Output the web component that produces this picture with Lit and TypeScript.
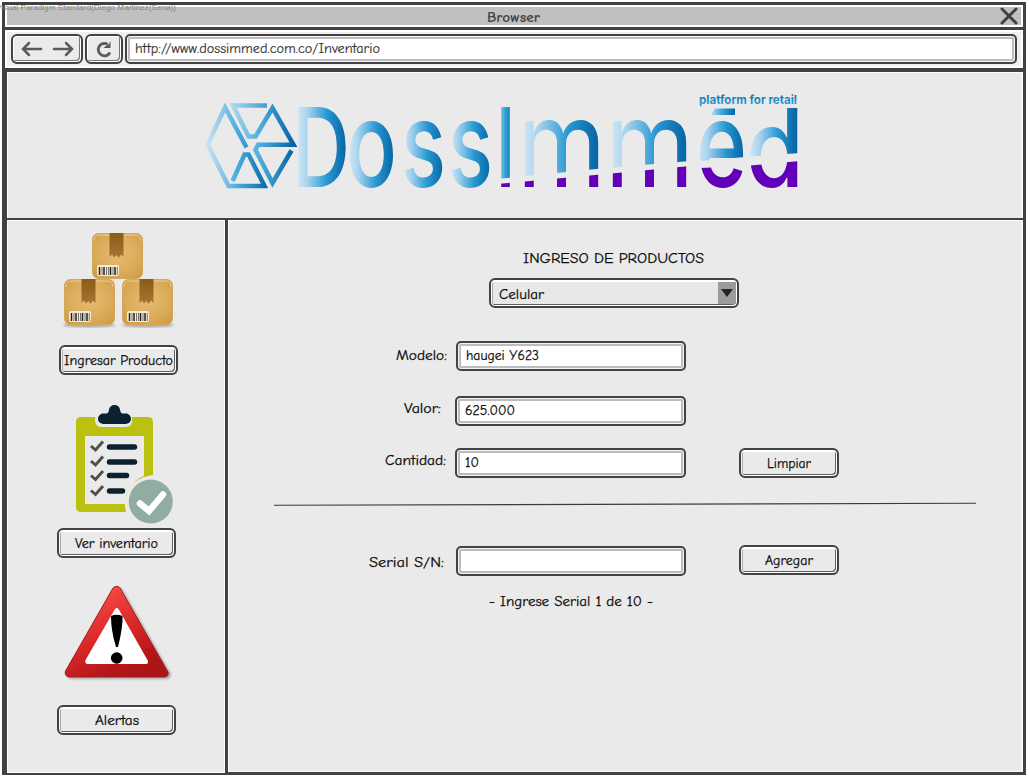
import { LitElement, html, svg, css, nothing } from "lit";
import { customElement, property } from "lit/decorators.js";

// One line of interface text with a fixed advance width and its baseline at 15px.
const line = (text: string, width: number, cls = "") => html`
  <svg class="line ${cls}" width=${width} height="20">
    <text x="0" y="15" textLength=${width} lengthAdjust="spacingAndGlyphs">${text}</text>
  </svg>`;

const shared = css`
  :host { display: block; box-sizing: border-box; }
  * { box-sizing: border-box; }
  svg { display: block; flex: none; overflow: visible; }
  .line { font: 14px "Comic Sans MS", "Comic Neue", "Noto Sans", sans-serif; fill: #0c0c0c; stroke: #0c0c0c; stroke-width: .25px; }
  .bold { font-weight: 700; fill: #444; stroke: none; font-size: 14px; }
  .url { fill: #333; stroke: #333; stroke-width: .15px; }
`;

@customElement("sketch-button")
class SketchButton extends LitElement {
  @property() label = "";
  @property({ type: Number }) text = 50;
  static styles = [shared, css`
    .btn { height: 30px; border: 2px solid #434345; border-radius: 6px; background: #eaeaea; display: flex; align-items: center; justify-content: center; padding: 0;
      box-shadow: inset 0 2px #fff, inset 1px 0 #f6f6f6, inset -1px -1px #fff, inset 2px 0 #aaa, inset -2px -2px #606062; }
  `];
  render() { return html`<div class="btn">${line(this.label, this.text)}</div>`; }
}

@customElement("sketch-field")
class SketchField extends LitElement {
  @property() value = "";
  @property({ type: Number }) text = 0;
  @property() kind = "";
  static styles = [shared, css`
    .field { height: 30px; border: 2px solid #434345; border-radius: 5px; background: #fff; padding: 2px 0 0 8px;
      box-shadow: inset 0 0 0 1px #f4f4f4, inset 0 0 0 3px #bdbdbd; }
  `];
  render() {
    return html`<div class="field">${this.value ? line(this.value, this.text, this.kind) : nothing}</div>`;
  }
}

const carton = (x: number, y: number) => svg`
  <g transform="translate(${x} ${y})">
    <rect x=".5" y=".5" width="50" height="45" rx="6" fill="url(#card)" stroke="#d3a75d" />
    <path d="M2 8Q2 2 8 2H43Q49 2 49 8" fill="none" stroke="#edcf94" />
    <path d="M17.500 0H31.500V24L29 21.500 26.500 25 24.500 22 22 24.500 20 21.500 17.500 24Z" fill="url(#tape)" />
    <rect x="5" y="32" width="22" height="11" rx="2" fill="#f7ead3" />
    <path d="M7.500 34V42M12 34V42M18.500 34V42M23 34V42" stroke="#222" stroke-width="1.500" />
    <path d="M10 34V42M14.500 34V42M16.500 34V42M21 34V42M25.300 34V42" stroke="#555" stroke-width=".8" />
  </g>`;

const boxes = html`
  <svg width="116" height="98" viewBox="61 232 116 98">
    <defs>
      <radialGradient id="card" cx=".5" cy=".45" r=".75"><stop stop-color="#e6bd72" /><stop offset=".6" stop-color="#daaa58" /><stop offset="1" stop-color="#cb9640" /></radialGradient>
      <linearGradient id="tape" x2="0" y2="1"><stop stop-color="#8a5a18" /><stop offset="1" stop-color="#a67631" /></linearGradient>
      <filter id="soft"><feGaussianBlur stdDeviation="1.200" /></filter>
    </defs>
    <ellipse cx="89" cy="325" rx="26" ry="2.500" fill="#aaa" filter="url(#soft)" />
    <ellipse cx="148" cy="325" rx="26" ry="2.500" fill="#aaa" filter="url(#soft)" />
    ${carton(92, 233)}${carton(64, 279)}${carton(122, 279)}
  </svg>`;

const clipboard = html`
  <svg width="104" height="124" viewBox="73 402 104 124">
    <path fill-rule="evenodd" fill="#bac110" d="M81 417H148Q153 417 153 422V475Q142 476 134 483Q125 493 124.500 503L126 512H81Q76 512 76 507V422Q76 417 81 417ZM85 436V504H124.500Q125 493 134 483Q138 478 144 476V436Z" />
    <path d="M98 414Q104 414 106 410Q109 403 115 403T123 410Q125 413 130 414Q134 419 131 425Q129 427 125 427H102Q96 427 95 421Q95 416 98 414Z" fill="#eaeaea" />
    <path d="M102 413.500H107Q109 412 109 409.500Q110 405 114.500 405T120 409.500Q120 412 122 413.500H127Q131 415 131 419T126 424H103Q98 423 98 419T102 413.500Z" fill="#0b2130" />
    <g fill="none" stroke="#50514a" stroke-width="3"><path d="M91 446L95.500 450 103 441.500M91 461L95.500 465 103 456.500M91 475.500L95.500 479.500 103 471M91 490.500L95.500 494.500 103 486" /></g>
    <path d="M109.500 447H134.500M109.500 462H134.500M109.500 475.500H126.500M109.500 491H122.500" stroke="#0b2130" stroke-width="5.500" stroke-linecap="round" />
    <circle cx="150.800" cy="501.500" r="22" fill="#91aca0" />
    <path d="M140 503.500L149 511 163 494.500" fill="none" stroke="#fff" stroke-width="6.500" stroke-linecap="round" stroke-linejoin="miter" />
  </svg>`;

const warning = html`
  <svg width="112" height="98" viewBox="62 584 112 98">
    <defs>
      <linearGradient id="red" x2=".5" y2="1"><stop stop-color="#ff5a52" /><stop offset=".55" stop-color="#df2b2b" /><stop offset="1" stop-color="#ad1217" /></linearGradient>
      <filter id="drop"><feDropShadow dx="2" dy="1.500" stdDeviation="1" flood-opacity=".3" /></filter>
    </defs>
    <path d="M113 588Q116.500 584.500 120 588L168 672Q169 676 165 677H69Q64 676 65.500 671Z" fill="url(#red)" stroke="#9b2020" filter="url(#drop)" />
    <path d="M115 609Q116.500 607 118.500 609L148 661Q148.500 664 146 664H87Q84.500 663 85.500 660Z" fill="#fff" />
    <path d="M111 616Q116.500 613.500 122.500 616Q123 627 118 647H116Q111 631 111 616Z" />
    <circle cx="116.700" cy="658" r="5.800" />
  </svg>`;

// Glyph, left edge, advance width, font size, weight.
const glyphs: [string, number, number, number, number][] = [
  ["D", 292, 58, 110, 500], ["o", 346, 51, 120, 500], ["s", 401, 45, 120, 500], ["s", 448, 45, 120, 500], ["I", 493, 25, 110, 400],
  ["m", 517, 89, 121, 400], ["m", 605, 89, 121, 400], ["e", 696, 51, 120, 500], ["d", 746, 58, 108, 500],
];
const bands = [[299, 346], [351, 393], [404, 443], [451, 490], [501, 510], [524, 599], [612, 687], [700, 743], [752, 796]];

const logo = html`
  <svg width="600" height="104" viewBox="202 90 600 104">
    <defs>
      <linearGradient id="blue"><stop stop-color="#d9e9f5" /><stop offset=".22" stop-color="#a9d4ef" /><stop offset=".58" stop-color="#2798d2" /><stop offset="1" stop-color="#005b9c" /></linearGradient>
      <linearGradient id="slab"><stop stop-color="#b6dcf3" /><stop offset=".5" stop-color="#319fd7" /><stop offset="1" stop-color="#0067aa" /></linearGradient>
      <linearGradient id="tag" x2="0" y2="1"><stop stop-color="#0066a8" /><stop offset="1" stop-color="#38a5d9" /></linearGradient>
      <linearGradient id="hex1" gradientUnits="userSpaceOnUse" x1="206" x2="270"><stop stop-color="#cfe5f5" /><stop offset=".5" stop-color="#4aaadb" /><stop offset="1" stop-color="#0062a6" /></linearGradient>
      <linearGradient id="hex2" gradientUnits="userSpaceOnUse" x1="226" x2="297"><stop stop-color="#c1e1f4" /><stop offset=".5" stop-color="#4ba9db" /><stop offset="1" stop-color="#005c9d" /></linearGradient>
      <pattern id="paint" patternUnits="userSpaceOnUse" x="200" y="80" width="620" height="130">
        <g transform="translate(-200 -80)">
          ${bands.map(([a, b]) => svg`<rect x=${a - 4} y="80" width=${b - a + 8} height="130" fill=${b - a < 20 ? "url(#slab)" : "url(#blue)"} />`)}
          <path d="M497 179L606 168 690 161 700 161 745 157 800 153V210H497Z" fill="#eaeaea" />
          <path d="M497 184L606 174 690 166 700 168 745 166 800 161V210H497Z" fill="#6100b8" />
        </g>
      </pattern>
    </defs>
    <g fill="none" stroke-width="4.500" stroke-linejoin="miter">
      <path d="M246.500 147.500L225 107.500 207.500 144.500 228.500 186H264.500L248.500 154.500H244.500L232.500 181" stroke="url(#hex1)" />
      <path d="M267 105.500H233L248.500 136.500H255.500L272.500 108 293.500 144.800H258L255.500 150 272.500 183 291.500 150.500" stroke="url(#hex2)" />
    </g>
    <text class="brand" y="187" fill="url(#paint)">${glyphs.map(([g, x, w, s, b]) => svg`<tspan x=${x} textLength=${w} lengthAdjust="spacingAndGlyphs" font-size=${s} font-weight=${b}>${g}</tspan>`)}</text>
    <path d="M711 115L715 108.500H735V115Z" fill="url(#slab)" />
    <text class="tag" x="699" y="103.500" textLength="98" lengthAdjust="spacingAndGlyphs" fill="url(#tag)">platform for retail</text>
  </svg>`;

@customElement("app-root")
class AppRoot extends LitElement {
  static styles = [shared, css`
    :host { width: 1030px; height: 779px; background: #fff; padding: 2px 0 0 2px; position: relative; overflow: hidden; }
    .window { width: 1024px; height: 773px; border: 3px solid #414142; border-bottom-width: 2px; display: flex; flex-direction: column; }
    .title { height: 22px; border: 2px solid #fff; background: #c0c0c0; display: flex; justify-content: flex-end; padding: 0 3px 0 0; flex: none; position: relative; }
    .title .bold { position: absolute; left: 480px; top: 0; }
    .bar { height: 41px; border-top: 3px solid #414142; background: #efefef; display: flex; padding: 4px 6px 0 6px; gap: 2px; flex: none; box-shadow: inset 0 2px #fff, inset 0 -2px #fff, inset 2px 0 #fff, inset -2px 0 #fff; }
    .nav { height: 30px; border: 2px solid #434345; border-radius: 6px; background: #ebebeb; display: flex; align-items: center; justify-content: center; box-shadow: inset 1px 1px #fff, inset -1px -1px #fff, inset -2px -2px #777; }
    .pair { width: 72px; gap: 11px; }
    .reload { width: 38px; }
    .address { flex: 1; }
    .page { flex: 1; background: #eaeaea; border-left: 2px solid #414142; border-top: 4px solid #414142; display: flex; flex-direction: column; min-height: 0; }
    .banner { height: 146px; box-shadow: inset 0 1px #fff, inset 1px 0 #fff, inset -2px 0 #f8f8f8; padding: 18px 0 0 195px; flex: none; }
    .body { flex: 1; border-top: 2px solid #414142; display: flex; min-height: 0; }
    .side { width: 221px; border-right: 3px solid #414142; display: flex; flex-direction: column; box-shadow: inset 1px 1px #fff, inset -1px -1px #fff; flex: none; }
    .boxes { margin: 12px 0 0 54px; }
    .ingresar { width: 119px; margin: 15px 0 0 52px; }
    .board { margin: 27px 0 0 66px; }
    .ver { width: 119px; margin: 2px 0 0 50px; }
    .warn { margin: 26px 0 0 55px; }
    .alertas { width: 119px; margin: 23px 0 0 50px; }
    .main { flex: 1; display: flex; flex-direction: column; box-shadow: inset 1px 1px #fff, inset -2px -1px #f8f8f8; border-bottom: 1px solid #414142; }
    .heading { margin: 28px 0 0 295px; }
    .select { width: 250px; height: 30px; margin: 10px 0 0 261px; border: 2px solid #434345; border-radius: 6px; display: flex; padding: 4px 0 0 8px; background: #e8e8e8; justify-content: space-between; box-shadow: inset 0 2px #fff, inset 1px 0 #fff, inset -1px -1px #fff, inset 2px 0 #aaa, inset -2px -2px #606062; }
    .drop { width: 18px; height: 22px; margin: -2px 1px 0 0; background: #9b9b9b; }
    .row { display: flex; height: 30px; }
    .name { display: flex; justify-content: flex-end; }
    .modelo { margin-top: 33px; } .valor { margin-top: 25px; } .cantidad { margin-top: 22px; }
    .modelo .name { width: 219px; padding-top: 4px; margin-right: 9px; }
    .valor .name { width: 213px; padding-top: 2px; margin-right: 14px; }
    .cantidad .name { width: 218px; padding-top: 2px; margin-right: 9px; }
    .serial .name { width: 216px; padding-top: 6px; margin-right: 12px; }
    .w230 { width: 230px; } .w231 { width: 231px; }
    .action { width: 100px; margin-left: 53px; }
    .rule { margin: 24px 0 0 46px; }
    .serial { margin-top: 40px; } .serial .action { margin-top: -1px; }
    .hint { margin: 15px 0 0 261px; }
    .brand { font-family: Inter, sans-serif; }
    .tag { font: 700 12px Inter, sans-serif; }
    .mark { position: absolute; left: -4px; top: -1px; }
    .mark text { font: 8px "Liberation Sans", sans-serif; fill: #858585; }
  `];

  render() {
    return html`
      <div class="window">
        <div class="title">
          ${line("Browser", 53, "bold")}
          <svg width="18" height="18"><path d="M2 2L16 16M16 2L2 16" stroke="#404040" stroke-width="3" stroke-linecap="round" /></svg>
        </div>
        <div class="bar">
          <div class="nav pair">
            <svg width="21" height="16"><path d="M20 8H2M8 2L2 8 8 14" fill="none" stroke="#5a5a5a" stroke-width="2.500" stroke-linecap="round" /></svg>
            <svg width="21" height="16"><path d="M1 8H19M13 2L19 8 13 14" fill="none" stroke="#5a5a5a" stroke-width="2.500" stroke-linecap="round" /></svg>
          </div>
          <div class="nav reload">
            <svg width="18" height="18"><path d="M15 12.500A6.200 6.200 0 1 1 12.500 4.200" fill="none" stroke="#5a5a5a" stroke-width="2.800" /><path d="M15.500 1V8H8.500L11.500 5.500 14 4Z" fill="#5a5a5a" /></svg>
          </div>
          <sketch-field class="address" value="http://www.dossimmed.com.co/Inventario" text="245" kind="url"></sketch-field>
        </div>
        <div class="page">
          <div class="banner">${logo}</div>
          <div class="body">
            <div class="side">
              <div class="boxes">${boxes}</div>
              <sketch-button class="ingresar" label="Ingresar Producto" text="109"></sketch-button>
              <div class="board">${clipboard}</div>
              <sketch-button class="ver" label="Ver inventario" text="83"></sketch-button>
              <div class="warn">${warning}</div>
              <sketch-button class="alertas" label="Alertas" text="44"></sketch-button>
            </div>
            <div class="main">
              <div class="heading">${line("INGRESO DE PRODUCTOS", 181)}</div>
              <div class="select">${line("Celular", 45)}
                <div class="drop"><svg width="18" height="22"><path d="M3 7H15L9 15Z" fill="#222" /></svg></div>
              </div>
              <div class="row modelo"><div class="name">${line("Modelo:", 51)}</div><sketch-field class="w230" value="haugei Y623" text="73"></sketch-field></div>
              <div class="row valor"><div class="name">${line("Valor:", 37)}</div><sketch-field class="w231" value="625.000" text="50"></sketch-field></div>
              <div class="row cantidad"><div class="name">${line("Cantidad:", 61)}</div><sketch-field class="w231" value="10" text="14"></sketch-field>
                <sketch-button class="action" label="Limpiar" text="44"></sketch-button></div>
              <div class="rule"><svg width="702" height="4"><path d="M0 3.300L702 1.300" stroke="#3c3c3c" stroke-width="1.100" /></svg></div>
              <div class="row serial"><div class="name">${line("Serial S/N:", 75)}</div><sketch-field class="w230"></sketch-field>
                <sketch-button class="action" label="Agregar" text="48"></sketch-button></div>
              <div class="hint">${line("- Ingrese Serial 1 de 10 -", 164)}</div>
            </div>
          </div>
        </div>
      </div>
      <svg class="mark" width="182" height="14"><text x="0" y="11" textLength="180" lengthAdjust="spacingAndGlyphs">Visual Paradigm Standard(Diego Martinez(Sena))</text></svg>
    `;
  }
}
